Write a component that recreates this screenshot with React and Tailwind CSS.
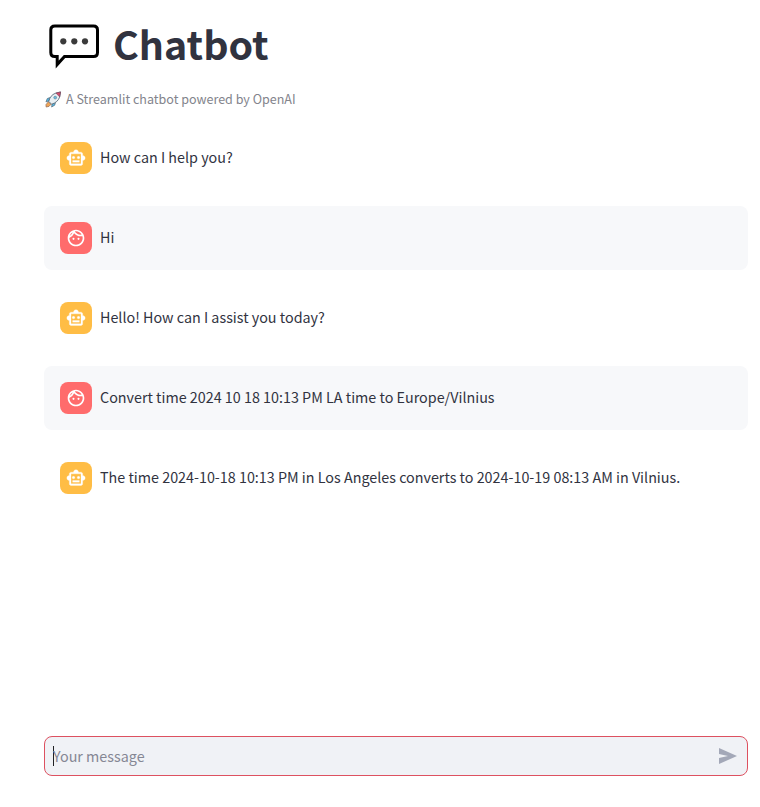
import { MdOutlineFace } from "react-icons/md";

const messages = [
  { role: "assistant", text: "How can I help you?" },
  { role: "user", text: "Hi" },
  { role: "assistant", text: "Hello! How can I assist you today?" },
  { role: "user", text: "Convert time 2024 10 18 10:13 PM LA time to Europe/Vilnius" },
  {
    role: "assistant",
    text: "The time 2024-10-18 10:13 PM in Los Angeles converts to 2024-10-19 08:13 AM in Vilnius.",
  },
];

function SpeechBubble() {
  return (
    <svg className="ml-1 h-[48px] w-[54px] shrink-0" viewBox="0 0 54 48" fill="none">
      <path
        d="M6.8 5.1H45.5Q49.5 5.1 49.5 9.1V31.5Q49.5 35.5 45.5 35.5H16.5L9.2 43.6V35.5H6.8Q2.8 35.5 2.8 31.5V9.1Q2.8 5.1 6.8 5.1Z"
        stroke="#000"
        strokeWidth="3"
      />
      <circle cx="15.3" cy="20.3" r="3.1" fill="#3b3b3b" />
      <circle cx="26.3" cy="20.3" r="3.1" fill="#3b3b3b" />
      <circle cx="37" cy="20.3" r="3.1" fill="#3b3b3b" />
    </svg>
  );
}

function Rocket() {
  return (
    <svg className="ml-px h-[17px] w-[17px] shrink-0" viewBox="0 0 18 18" strokeLinejoin="round">
      <path d="M5 7L2.4 8L1 11.5L4.5 10.5Z" fill="#57b7e2" stroke="#526575" strokeWidth=".7" />
      <path d="M11 12.5L10.3 15L7 17L7.6 13Z" fill="#57b7e2" stroke="#526575" strokeWidth=".7" />
      <path d="M3.5 11.5L1 14.5L1.2 17L4.2 16.3L6.5 14Z" fill="#f0a657" stroke="#8b6655" strokeWidth=".7" />
      <path d="M4 11Q5.5 4.5 11 2.4L16.5 1L15.5 6.5Q13.5 12 7 14Z" fill="#e9f0f4" stroke="#526575" strokeWidth=".9" />
      <path d="M11.5 2.2L16.5 1L15.5 6.2Z" fill="#d64d6c" stroke="#7d4960" strokeWidth=".7" />
      <circle cx="10.8" cy="7" r="1.5" fill="#63bfe6" stroke="#607484" strokeWidth=".6" />
    </svg>
  );
}

function Robot({ className }) {
  return (
    <svg className={className} viewBox="0 0 24 24" fill="currentColor" stroke="currentColor" strokeWidth=".35">
      <path d="M20 9V7c0-1.1-.9-2-2-2h-3c0-1.66-1.34-3-3-3S9 3.34 9 5H6c-1.1 0-2 .9-2 2v2c-1.66 0-3 1.34-3 3s1.34 3 3 3v4c0 1.1.9 2 2 2h12c1.1 0 2-.9 2-2v-4c1.66 0 3-1.34 3-3s-1.34-3-3-3zm-2 10H6V7h12v12z" />
      <circle cx="9" cy="11.5" r="1.5" />
      <circle cx="15" cy="11.5" r="1.5" />
      <path d="M8 15h8v2H8z" />
    </svg>
  );
}

function Message({ role, text }) {
  const isUser = role === "user";
  const Icon = isUser ? MdOutlineFace : Robot;
  return (
    <div className={`flex h-16 items-center gap-2 rounded-lg px-4 ${isUser ? "bg-[#f7f8fa]" : ""}`}>
      <div
        className={`flex size-8 shrink-0 items-center justify-center rounded-lg text-white ${
          isUser ? "bg-[#ff6c6c]" : "bg-[#ffbd45]"
        }`}
      >
        <Icon className="size-5" />
      </div>
      <p className="pb-0.5 text-[14.335px] leading-6 whitespace-nowrap">{text}</p>
    </div>
  );
}

export default function App() {
  return (
    <div className="flex h-[807px] flex-col bg-white pr-3 pl-11 font-['Noto_Sans_CJK_SC',sans-serif] text-[#31333f]">
      <header className="flex h-[90px] items-center gap-[11px]">
        <SpeechBubble />
        <h1 className="pb-[5px] text-[39.4px] leading-[52px] font-bold">Chatbot</h1>
      </header>
      <div className="flex h-[18px] items-center gap-1 text-[12.54px] text-[#83848c]">
        <Rocket />
        <span>A Streamlit chatbot powered by OpenAI</span>
      </div>
      <main className="mt-[18px] flex flex-col gap-4">
        {messages.map((m) => (
          <Message key={m.text} {...m} />
        ))}
      </main>
      <div className="mt-auto mb-[31px] flex h-10 shrink-0 items-center justify-between rounded-lg border border-[#dd5160] bg-[#f0f2f6] pr-[10px] pl-2">
        <div className="flex items-center">
          <span className="-mr-px h-5 w-px bg-[#202124]" />
          <span className="text-[14.335px] leading-6 text-[#858794]">Your message</span>
        </div>
        <svg className="h-4 w-[18px]" viewBox="0 0 18 16" fill="#a3a8b8">
          <path d="M0 0L18 8L0 16V9.9L9 8L0 6.1Z" />
        </svg>
      </div>
    </div>
  );
}
